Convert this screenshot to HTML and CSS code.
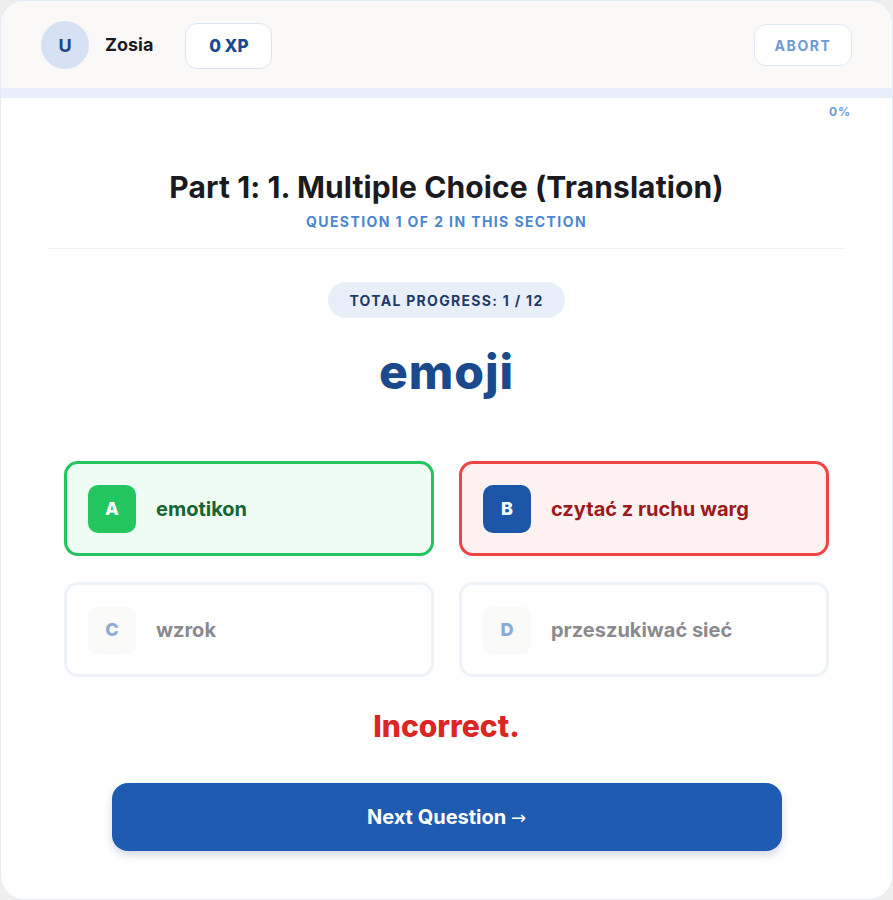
FILE: index.html
```html
<!DOCTYPE html>
<html lang="pl">
<head>
<meta charset="utf-8">
<title>Quiz</title>
<link rel="stylesheet" href="styles.css">
</head>
<body>
<div class="card">
  <header class="topbar">
    <div class="user">
      <div class="avatar">U</div>
      <div class="name">Zosia</div>
      <div class="xp">0 XP</div>
    </div>
    <button class="abort">ABORT</button>
  </header>
  <div class="progress"><div class="progress-fill"></div></div>
  <div class="percent">0%</div>
  <main class="content">
    <h1 class="title">Part 1: 1. Multiple Choice (Translation)</h1>
    <div class="subtitle">QUESTION 1 OF 2 IN THIS SECTION</div>
    <div class="divider"></div>
    <div class="pill-row"><span class="pill">TOTAL PROGRESS: 1 / 12</span></div>
    <div class="word">emoji</div>
    <div class="options">
      <div class="option correct"><span class="badge">A</span><span class="opt-text">emotikon</span></div>
      <div class="option wrong"><span class="badge">B</span><span class="opt-text">czytać z ruchu warg</span></div>
      <div class="option idle"><span class="badge">C</span><span class="opt-text">wzrok</span></div>
      <div class="option idle"><span class="badge">D</span><span class="opt-text">przeszukiwać sieć</span></div>
    </div>
    <div class="feedback">Incorrect.</div>
    <button class="next">Next Question <span class="arrow">→</span></button>
  </main>
</div>
</body>
</html>
```

FILE: styles.css
```css
* { box-sizing: border-box; }
html, body { margin: 0; padding: 0; }
body {
  background: #eeeeee;
  font-family: Inter, "Noto Sans", sans-serif;
  width: 893px;
  height: 900px;
}
.card {
  width: 893px;
  height: 900px;
  background: #ffffff;
  border: 1px solid #e3ebf6;
  border-radius: 24px;
  overflow: hidden;
}
.topbar {
  height: 87px;
  background: #faf9f7;
  display: flex;
  align-items: center;
  justify-content: space-between;
  padding: 0 40px 0 40px;
}
.user { display: flex; align-items: center; }
.avatar {
  width: 48px; height: 48px;
  border-radius: 50%;
  background: #d6e2f4;
  color: #1b4585;
  font-weight: 700;
  font-size: 18px;
  display: flex; align-items: center; justify-content: center;
  margin-top: 1px;
}
.name {
  margin-left: 16px;
  font-weight: 700;
  font-size: 18px;
  color: #1a1a1f;
}
.xp {
  margin-left: 32px;
  width: 87px; height: 46px;
  background: #fff;
  border: 1px solid #d9e4f4;
  border-radius: 12px;
  display: flex; align-items: center; justify-content: center;
  font-weight: 800;
  font-size: 17px;
  color: #1a4a8c;
  margin-top: 2px;
}
.abort {
  width: 98px; height: 42px;
  background: #fff;
  border: 1px solid #dfe8f5;
  border-radius: 12px;
  font-family: Inter, sans-serif;
  font-weight: 700;
  font-size: 14px;
  letter-spacing: 1.6px;
  color: #6e9bd6;
  margin-top: 1px;
}
.progress {
  height: 10px;
  background: #e8eff9;
}
.progress-fill { width: 0; height: 100%; background: #1f5bb0; }
.percent {
  text-align: right;
  padding-right: 41px;
  margin-top: 6px;
  font-size: 12px;
  font-weight: 700;
  letter-spacing: 0.8px;
  color: #6e9bd6;
  line-height: 16px;
}
.content {
  padding: 0 47px;
  display: flex;
  flex-direction: column;
  align-items: stretch;
}
.title {
  margin: 49px 0 0;
  text-align: center;
  font-size: 30px;
  line-height: 36px;
  font-weight: 700;
  letter-spacing: 0.1px;
  color: #1a1a1f;
}
.subtitle {
  margin-top: 9px;
  text-align: center;
  font-size: 14px;
  line-height: 16px;
  font-weight: 700;
  letter-spacing: 1.4px;
  color: #4a87d0;
}
.divider {
  margin-top: 18px;
  height: 1px;
  background: #f1f2f4;
}
.pill-row { display: flex; justify-content: center; margin-top: 33px; }
.pill {
  height: 36px;
  padding: 0 21px;
  display: inline-flex; align-items: center;
  background: #e8eff9;
  border-radius: 18px;
  font-size: 14px;
  font-weight: 700;
  letter-spacing: 1.3px;
  color: #1e3a68;
}
.word {
  margin-top: 26px;
  text-align: center;
  font-size: 48px;
  line-height: 56px;
  font-weight: 800;
  letter-spacing: 1px;
  color: #1a4a8c;
}
.options {
  margin: 61px 16px 0;
  display: grid;
  grid-template-columns: 1fr 1fr;
  column-gap: 25px;
  row-gap: 26px;
}
.option {
  height: 95px;
  border-radius: 14px;
  border: 3px solid #eef3fa;
  background: #fff;
  display: flex;
  align-items: center;
  padding-left: 21px;
}
.badge {
  width: 48px; height: 48px;
  border-radius: 10px;
  display: flex; align-items: center; justify-content: center;
  font-weight: 800;
  font-size: 18px;
  flex: none;
}
.opt-text {
  margin-left: 20px;
  font-size: 20px;
  font-weight: 700;
}
.correct { border-color: #22c55e; background: #effcf3; }
.correct .badge { background: #22c55e; color: #fff; }
.correct .opt-text { color: #166534; }
.wrong { border-color: #ef4444; background: #fef1f1; }
.wrong .badge { background: #1d56a9; color: #fff; }
.wrong .opt-text { color: #991b1b; }
.idle .badge { background: #fafaf9; color: #8aa9d8; }
.idle .opt-text { color: #8a8a8e; }
.feedback {
  margin-top: 30px;
  text-align: center;
  font-size: 30px;
  line-height: 38px;
  font-weight: 800;
  letter-spacing: 0;
  color: #dc2626;
}
.next {
  align-self: center;
  margin-top: 38px;
  width: 670px;
  height: 68px;
  border: none;
  border-radius: 16px;
  background: #1f5bb0;
  color: #fff;
  font-family: Inter, sans-serif;
  font-weight: 700;
  font-size: 20px;
  box-shadow: 0 4px 8px rgba(30, 60, 110, 0.2);
}
.arrow {
  font-family: "DejaVu Sans", sans-serif;
  font-weight: 400;
  font-size: 18px;
}
```
